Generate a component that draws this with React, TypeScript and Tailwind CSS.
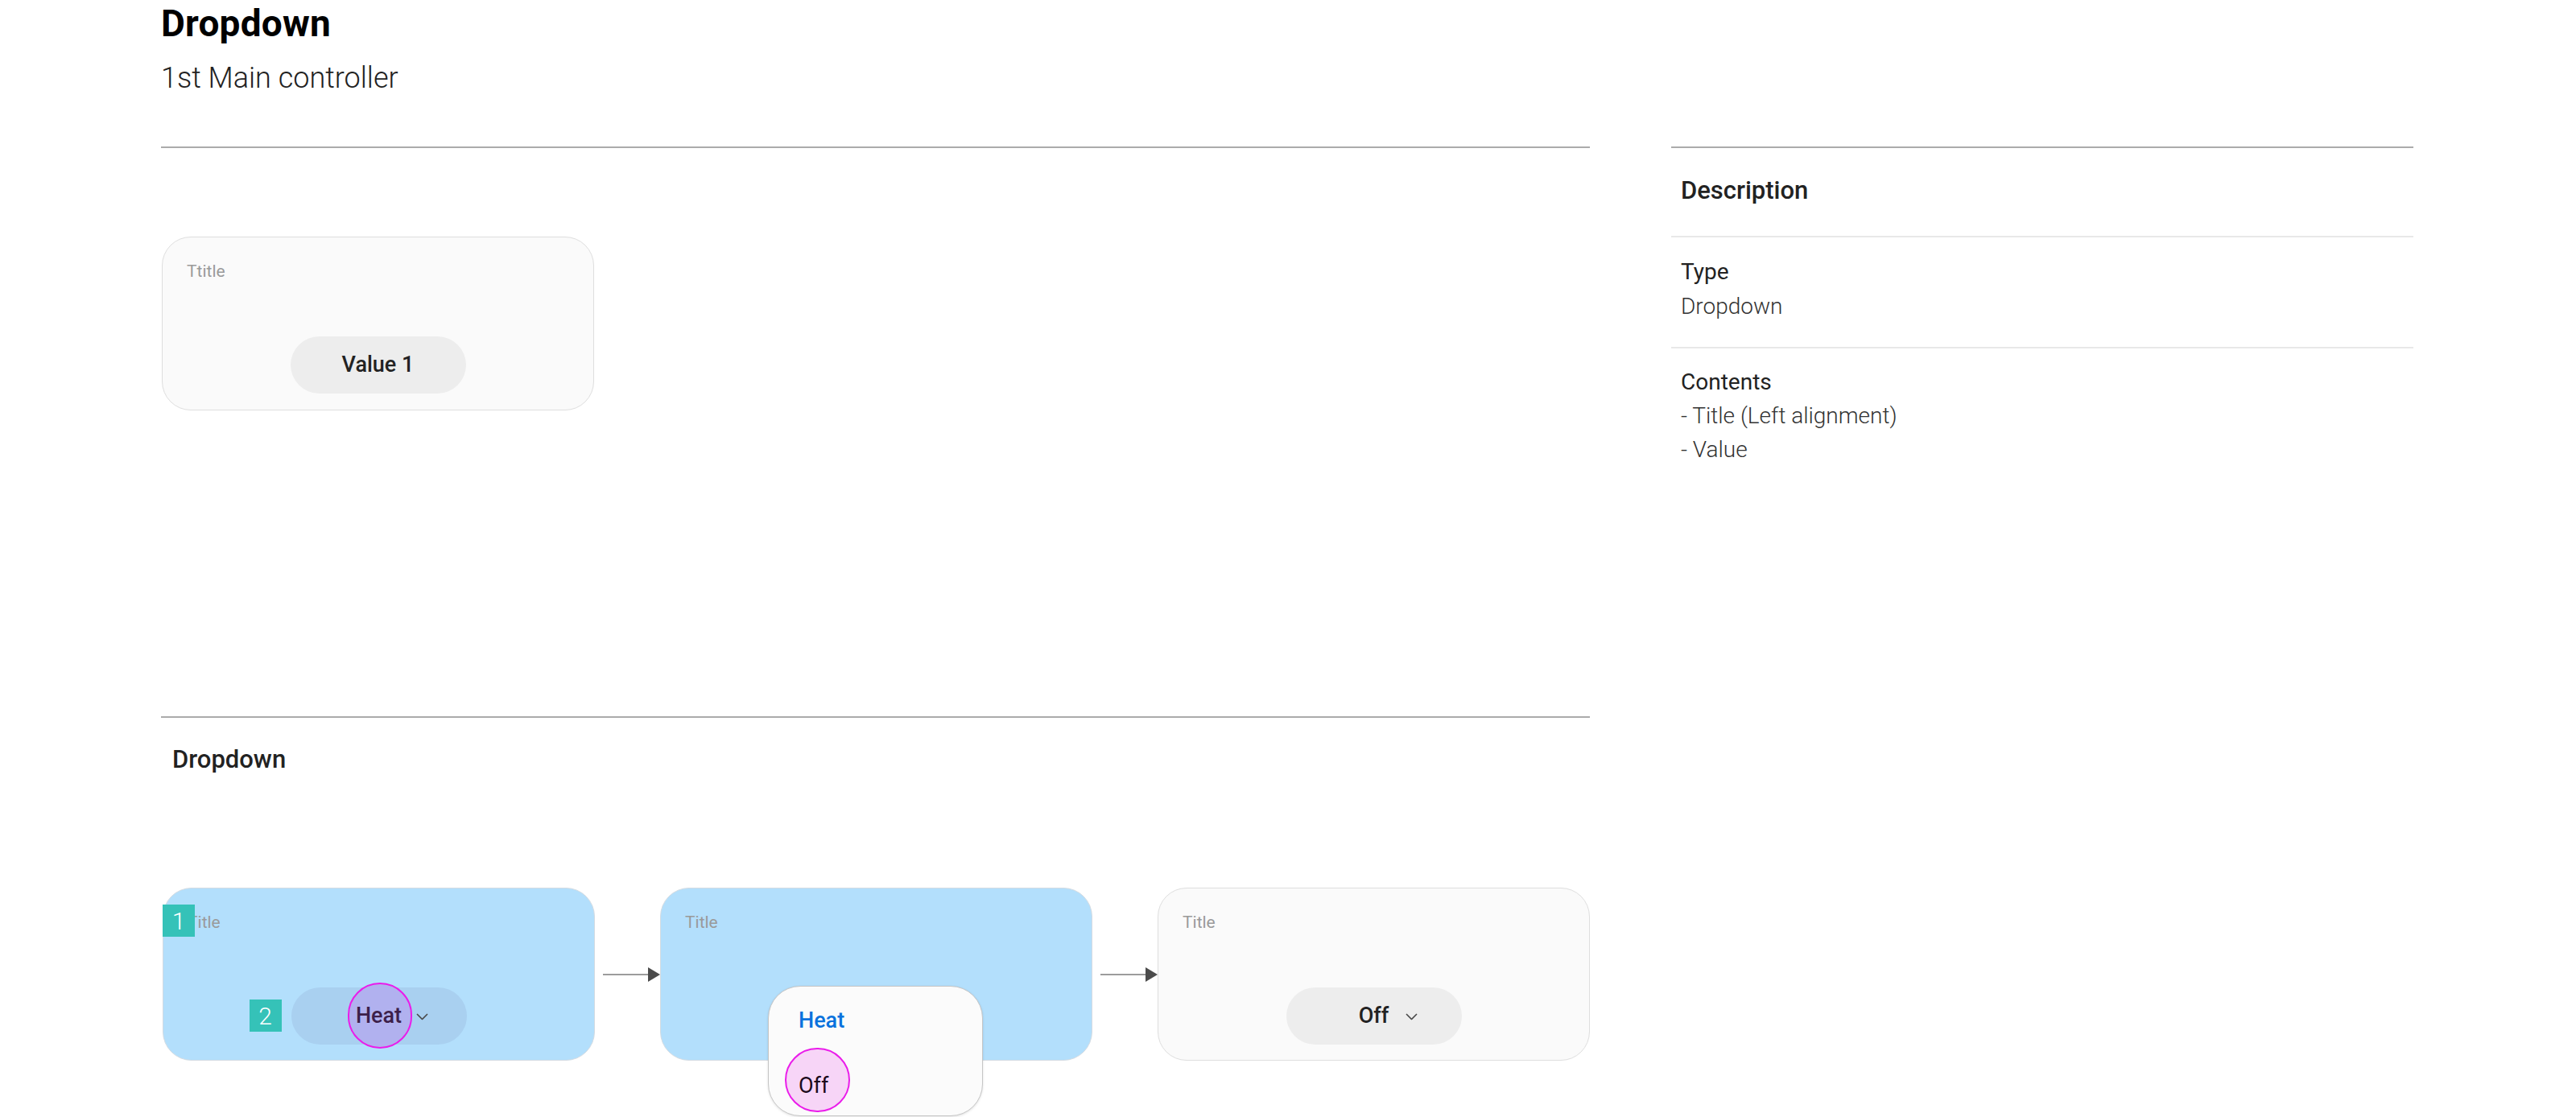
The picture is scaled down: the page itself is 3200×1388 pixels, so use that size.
import React from "react";

const Chevron = () => (
  <svg width="15" height="9" viewBox="0 0 15 9" fill="none">
    <polyline points="1,1.5 7.5,8 14,1.5" stroke="#4a4a4a" strokeWidth="1.6" />
  </svg>
);

const Arrow = () => (
  <div className="flex w-[82px] items-center pl-[10px]">
    <div className="h-[2px] flex-1 bg-[#9c9c9c]" />
    <svg width="15" height="18" viewBox="0 0 15 18">
      <polygon points="0,0 15,9 0,18" fill="#4b4b4b" />
    </svg>
  </div>
);

const Badge = ({ n, className }: { n: string; className: string }) => (
  <div
    className={`absolute flex h-[40px] w-[40px] items-center justify-center bg-[#35c2b8] text-[30px] font-light text-white ${className}`}
  >
    {n}
  </div>
);

interface CardProps {
  title: string;
  blue?: boolean;
  children?: React.ReactNode;
  className?: string;
}

function Card({ title, blue, children, className = "" }: CardProps) {
  return (
    <div
      className={`relative h-[215px] w-[537px] shrink-0 rounded-[36px] border ${
        blue ? "border-[#d3dbe2] bg-[#b3dffc]" : "border-[#dedede] bg-[#fafafa]"
      } ${className}`}
    >
      <div className="pl-[30px] pt-[32px] text-[21px] leading-[21px] text-[#9a9a9a]">{title}</div>
      {children}
    </div>
  );
}

function Pill({ children, bg = "bg-[#ededed]" }: { children: React.ReactNode; bg?: string }) {
  return (
    <div className={`relative mx-auto mt-[70px] flex h-[71px] w-[218px] items-center justify-center rounded-full ${bg}`}>
      {children}
    </div>
  );
}

export default function App() {
  return (
    <div className="relative h-[1388px] w-[3200px] overflow-hidden bg-white font-['Roboto',sans-serif] text-[#222]">
      <div className="h-[182px] pl-[200px] pt-[6px]">
        <h1 className="text-[46px] font-bold leading-[46px] tracking-[0.2px] text-black">Dropdown</h1>
        <p className="mt-[27px] text-[36px] font-light leading-[36px] text-[#222]">1st Main controller</p>
      </div>

      <div className="flex gap-[101px] pl-[200px]">
        {/* left column */}
        <div className="w-[1775px] border-t-2 border-[#ababab]">
          <div className="ml-px pt-[110px]">
            <Card title="Ttitle" className="h-[216px]">
              <Pill>
                <span className="text-[27px] font-medium text-[#222]">Value 1</span>
              </Pill>
            </Card>
          </div>

          <div className="mt-[380px] border-t-2 border-[#ababab]">
            <div className="pl-[14px] pt-[36px] text-[31px] font-medium leading-[31px] text-[#222]">Dropdown</div>

            <div className="ml-[2px] mt-[144px] flex items-center">
              <Card title="Title" blue>
                <Badge n="1" className="left-[-1px] top-[20px]" />
                <Pill bg="bg-[#a9d0f0]">
                  <Badge n="2" className="left-[-52px] top-[15px]" />
                  <div className="absolute left-[70px] top-[-6px] h-[82px] w-[80px] rounded-full border-2 border-[#ea1cea] bg-[#b1b1ef]" />
                  <span className="relative text-[27px] font-medium text-[#3d1f4a]">
                    Heat
                    <span className="absolute left-full top-1/2 ml-[18px] -translate-y-1/2">
                      <Chevron />
                    </span>
                  </span>
                </Pill>
              </Card>
              <Arrow />
              <Card title="Title" blue>
                <div className="absolute left-[133px] top-[121px] z-10 h-[162px] w-[267px] rounded-[40px] border border-[#c6c6c6] bg-[#fbfbfb] shadow-[0_1px_3px_rgba(0,0,0,0.12)]">
                  <div className="pl-[37px] pt-[29px] text-[27px] font-medium leading-[27px] text-[#0a72dd]">Heat</div>
                  <div className="absolute left-[20px] top-[76px] h-[80px] w-[81px] rounded-full border-2 border-[#ea1cea] bg-[#f7d5f7]" />
                  <div className="relative pl-[37px] pt-[54px] text-[27px] leading-[27px] text-[#1c0a1c]">Off</div>
                </div>
              </Card>
              <Arrow />
              <Card title="Title">
                <Pill>
                  <span className="relative text-[27px] font-medium text-[#222]">
                    Off
                    <span className="absolute left-full top-1/2 ml-[21px] -translate-y-1/2">
                      <Chevron />
                    </span>
                  </span>
                </Pill>
              </Card>
            </div>
          </div>
        </div>

        {/* right column */}
        <div className="w-[922px] border-t-2 border-[#ababab]">
          <div className="h-[111px] border-b-2 border-[#e8e8e8] pl-[12px] pt-[37px] text-[31px] font-medium leading-[31px] text-[#222]">
            Description
          </div>
          <div className="h-[138px] border-b-2 border-[#e8e8e8] pl-[12px] pt-[21px] text-[28px] leading-[43px]">
            <div className="text-[#222]">Type</div>
            <div className="font-light text-[#333]">Dropdown</div>
          </div>
          <div className="pl-[12px] pt-[21px] text-[28px] leading-[42px]">
            <div className="text-[#222]">Contents</div>
            <div className="font-light text-[#333]">- Title (Left alignment)</div>
            <div className="font-light text-[#333]">- Value</div>
          </div>
        </div>
      </div>
    </div>
  );
}
